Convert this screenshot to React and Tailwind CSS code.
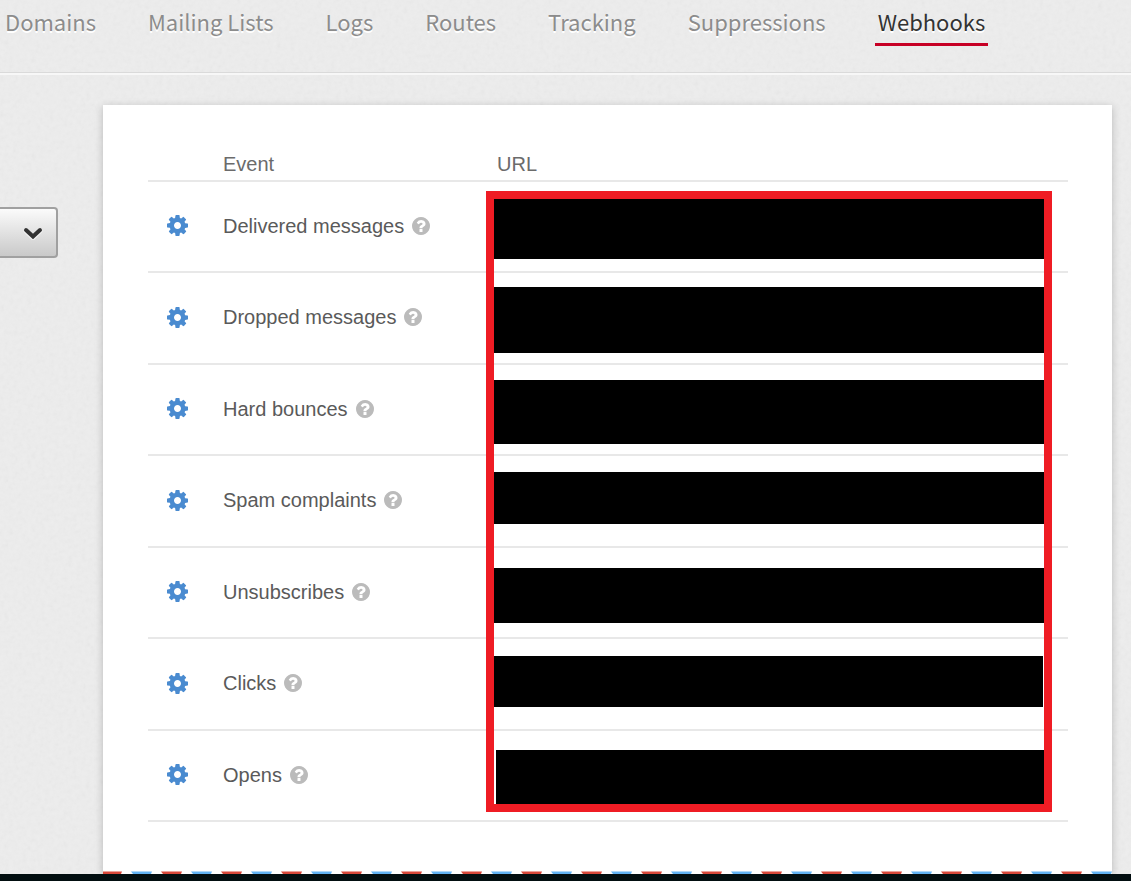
const navItems = [
  "Domains",
  "Mailing Lists",
  "Logs",
  "Routes",
  "Tracking",
  "Suppressions",
  "Webhooks",
];

const hooks = [
  { name: "Delivered messages", bar: "mt-[17px] mr-6 h-[60px]" },
  { name: "Dropped messages", bar: "mt-[14px] mr-6 h-[66px]" },
  { name: "Hard bounces", bar: "mt-[15px] mr-6 h-[64px]" },
  { name: "Spam complaints", bar: "mt-[16px] mr-6 h-[52px]" },
  { name: "Unsubscribes", bar: "mt-[20px] mr-6 h-[55px]" },
  { name: "Clicks", bar: "mt-[17px] mr-[25px] h-[51px]" },
  { name: "Opens", bar: "mt-[19px] mr-6 ml-0.5 h-[54px]" },
];

function GearIcon() {
  return (
    <svg viewBox="128 128 1536 1536" fill="currentColor" className="h-[21px] w-[21px]" aria-hidden="true">
      <path d="M1152 896q0-106-75-181t-181-75-181 75-75 181 75 181 181 75 181-75 75-181zm512-109v222q0 12-8 23t-20 13l-185 28q-19 54-39 91 35 50 107 138 10 12 10 25t-9 23q-27 37-99 108t-94 71q-12 0-26-9l-138-108q-44 23-91 38-16 136-29 186-7 28-36 28h-222q-14 0-24.5-8.5t-11.5-21.5l-28-184q-49-16-90-37l-141 107q-10 9-25 9-14 0-25-11-126-114-165-168-7-10-7-23 0-12 8-23 15-21 51-66.5t54-70.5q-27-50-41-99l-183-27q-13-2-21-12.5t-8-23.5v-222q0-12 8-23t19-13l186-28q14-46 39-92-40-57-107-138-10-12-10-24 0-10 9-23 26-36 98.5-107.5t94.5-71.5q13 0 26 10l138 107q44-23 91-38 16-136 29-186 7-28 36-28h222q14 0 24.5 8.5t11.5 21.5l28 184q49 16 90 37l142-107q9-9 24-9 13 0 25 10 129 119 165 170 7 8 7 22 0 12-8 23-15 21-51 66.5t-54 70.5q26 50 41 98l183 28q13 2 21 12.5t8 23.5z" />
    </svg>
  );
}

function HelpIcon() {
  return (
    <svg viewBox="128 128 1536 1536" fill="currentColor" className="h-[18px] w-[18px]" aria-hidden="true">
      <path d="M1024 1376v-192q0-14-9-23t-23-9h-192q-14 0-23 9t-9 23v192q0 14 9 23t23 9h192q14 0 23-9t9-23zm256-672q0-88-55.5-163t-138.5-116-170-41q-243 0-371 213-15 24 8 42l132 100q7 6 19 6 16 0 25-12 53-68 86-92 34-24 86-24 48 0 85.5 26t37.5 59q0 38-20 61t-68 45q-63 28-115.5 86.5t-52.5 125.5v36q0 14 9 23t23 9h192q14 0 23-9t9-23q0-19 21.5-49.5t54.5-49.5q32-18 49-28.5t46-35 44.5-48 28-60.5 12.5-81zm384 192q0 209-103 385.5t-279.5 279.5-385.5 103-385.5-103-279.5-279.5-103-385.5 103-385.5 279.5-279.5 385.5-103 385.5 103 279.5 279.5 103 385.5z" />
    </svg>
  );
}

function PaperTexture() {
  return (
    <svg className="absolute inset-0 -z-10 h-full w-full opacity-8" aria-hidden="true">
      <filter id="paper">
        <feTurbulence type="fractalNoise" baseFrequency="0.22" numOctaves="2" stitchTiles="stitch" />
        <feColorMatrix type="saturate" values="0" />
      </filter>
      <rect width="100%" height="100%" filter="url(#paper)" />
    </svg>
  );
}

// Airmail edge along the bottom of the card
function AirmailStripe() {
  return (
    <svg className="block h-[3px] w-full" aria-hidden="true">
      <defs>
        <pattern id="airmail" x="-2" width="60" height="3" patternUnits="userSpaceOnUse">
          <polygon points="0,0.5 21,0.5 20,3 2,3" fill="#d8483a" />
          <polygon points="30,0.5 51,0.5 50,3 32,3" fill="#62b4f5" />
        </pattern>
      </defs>
      <rect width="100%" height="3" fill="url(#airmail)" />
    </svg>
  );
}

function Nav() {
  return (
    <header className="border-b border-[#dadada] shadow-[0_2px_0_#f7f7f7]">
      <nav className="flex h-[72px] items-start gap-[46px] overflow-hidden pl-0.5 font-['Noto_Sans_CJK_JP','Open_Sans',sans-serif] text-[22px] leading-[43px] whitespace-nowrap [text-shadow:0_2px_0_#ffffff]">
        {navItems.map((item) => (
          <a
            key={item}
            href="#"
            className={
              item === "Webhooks"
                ? "border-b-[3px] border-[#c70025] px-[3px] text-[#333333]"
                : "px-[3px] text-[#8c8c8c]"
            }
            aria-current={item === "Webhooks" ? "page" : undefined}
          >
            {item}
          </a>
        ))}
      </nav>
    </header>
  );
}

function DomainSelect() {
  return (
    <div className="mt-[102px] mr-[45px] grid h-[51px] items-center">
      <select
        aria-label="Domain"
        className="col-start-1 row-start-1 h-full w-full appearance-none rounded-r-[4px] border-2 border-l-0 border-[#a0a0a0] bg-linear-to-b from-[#fbfbfb] to-[#c9c9c9]"
      >
        <option></option>
      </select>
      <svg
        viewBox="0 0 20 14"
        className="pointer-events-none col-start-1 row-start-1 mr-[15px] h-[14px] w-5 justify-self-end"
        fill="none"
        strokeLinecap="round"
        strokeLinejoin="miter"
        aria-hidden="true"
      >
        <path d="M3 5l7 6.5 7-6.5" stroke="#f2f2f2" strokeWidth="5" />
        <path d="M3 4l7 6.5 7-6.5" stroke="#333333" strokeWidth="4" />
      </svg>
    </div>
  );
}

function WebhooksTable() {
  return (
    <div className="relative">
      <table className="w-full table-fixed border-separate border-spacing-0 text-left text-[20px] leading-6 text-[#5a5a5a]">
        <thead>
          <tr className="h-[37px] text-[#6b6b6b]">
            <td className="w-[74px] border-b-2 border-[#e8e8e8] p-0"></td>
            <th scope="col" className="w-[272px] border-b-2 border-[#e8e8e8] p-0 pt-0.5 pl-px font-normal">
              Event
            </th>
            <th scope="col" className="border-b-2 border-[#e8e8e8] p-0 pt-0.5 pl-[3px] font-normal">
              URL
            </th>
          </tr>
        </thead>
        <tbody>
          {hooks.map((hook) => (
            <tr key={hook.name} className="h-[91px] even:h-[92px]">
              <td className="border-b-2 border-[#e8e8e8] p-0 pb-0.5 pl-[19px]">
                <button type="button" aria-label={`Edit ${hook.name}`} className="block text-[#4a8bd0]">
                  <GearIcon />
                </button>
              </td>
              <td className="border-b-2 border-[#e8e8e8] p-0 pb-0.5 pl-px">
                <div className="flex items-center gap-2">
                  {hook.name}
                  <button type="button" aria-label={`About ${hook.name}`} className="text-[#bbbbbb]">
                    <HelpIcon />
                  </button>
                </div>
              </td>
              <td className="border-b-2 border-[#e8e8e8] p-0 align-top">
                <div className={`bg-black ${hook.bar}`} />
              </td>
            </tr>
          ))}
        </tbody>
      </table>
      {/* Highlight frame around the URL column */}
      <div className="pointer-events-none absolute top-[46px] right-4 bottom-[10px] left-[338px] border-8 border-[#ef1c24]" />
    </div>
  );
}

export default function App() {
  return (
    <div className="relative isolate min-h-screen bg-[#ededed] font-['Liberation_Sans',Arial,sans-serif]">
      <PaperTexture />
      <Nav />
      <main className="flex pt-8">
        <aside className="w-[103px] shrink-0">
          <DomainSelect />
        </aside>
        <section className="mr-[19px] min-w-0 flex-1 bg-white shadow-[0_2px_8px_rgba(0,0,0,0.22)]">
          <div className="pt-10 pr-11 pb-[49px] pl-[45px]">
            <WebhooksTable />
          </div>
          <AirmailStripe />
        </section>
      </main>
      <footer className="relative h-[7px] bg-[#020e10]" />
    </div>
  );
}
